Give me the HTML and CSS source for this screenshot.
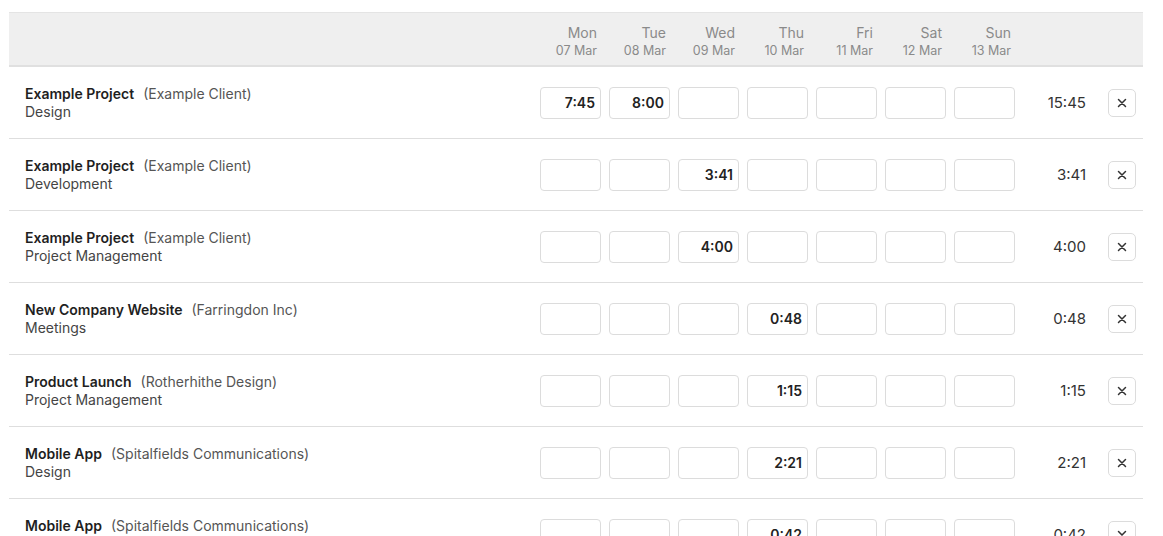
FILE: index.html
```html
<!DOCTYPE html>
<html lang="en">
<head>
<meta charset="utf-8">
<title>Timesheet</title>
<link rel="stylesheet" href="styles.css">
</head>
<body>
<div class="sheet">
  <div class="head">
    <div class="label"></div>
    <div class="days">
      <div class="day"><span class="dn">Mon</span><span class="dd">07 Mar</span></div>
      <div class="day"><span class="dn">Tue</span><span class="dd">08 Mar</span></div>
      <div class="day"><span class="dn">Wed</span><span class="dd">09 Mar</span></div>
      <div class="day"><span class="dn">Thu</span><span class="dd">10 Mar</span></div>
      <div class="day"><span class="dn">Fri</span><span class="dd">11 Mar</span></div>
      <div class="day"><span class="dn">Sat</span><span class="dd">12 Mar</span></div>
      <div class="day"><span class="dn">Sun</span><span class="dd">13 Mar</span></div>
    </div>
    <div class="total"></div>
    <div class="act"></div>
  </div>

  <div class="row">
    <div class="label"><div><b>Example Project</b><span class="client">(Example Client)</span></div><div class="task">Design</div></div>
    <div class="days">
      <div class="cell">7:45</div><div class="cell">8:00</div><div class="cell"></div><div class="cell"></div><div class="cell"></div><div class="cell"></div><div class="cell"></div>
    </div>
    <div class="total">15:45</div>
    <div class="act"><button class="del"><svg width="10" height="10" viewBox="0 0 10 10"><path d="M1.5 1.5 L8.5 8.5 M8.5 1.5 L1.5 8.5" stroke="#333" stroke-width="1.5" stroke-linecap="round"/></svg></button></div>
  </div>

  <div class="row">
    <div class="label"><div><b>Example Project</b><span class="client">(Example Client)</span></div><div class="task">Development</div></div>
    <div class="days">
      <div class="cell"></div><div class="cell"></div><div class="cell">3:41</div><div class="cell"></div><div class="cell"></div><div class="cell"></div><div class="cell"></div>
    </div>
    <div class="total">3:41</div>
    <div class="act"><button class="del"><svg width="10" height="10" viewBox="0 0 10 10"><path d="M1.5 1.5 L8.5 8.5 M8.5 1.5 L1.5 8.5" stroke="#333" stroke-width="1.5" stroke-linecap="round"/></svg></button></div>
  </div>

  <div class="row">
    <div class="label"><div><b>Example Project</b><span class="client">(Example Client)</span></div><div class="task">Project Management</div></div>
    <div class="days">
      <div class="cell"></div><div class="cell"></div><div class="cell">4:00</div><div class="cell"></div><div class="cell"></div><div class="cell"></div><div class="cell"></div>
    </div>
    <div class="total">4:00</div>
    <div class="act"><button class="del"><svg width="10" height="10" viewBox="0 0 10 10"><path d="M1.5 1.5 L8.5 8.5 M8.5 1.5 L1.5 8.5" stroke="#333" stroke-width="1.5" stroke-linecap="round"/></svg></button></div>
  </div>

  <div class="row">
    <div class="label"><div><b>New Company Website</b><span class="client">(Farringdon Inc)</span></div><div class="task">Meetings</div></div>
    <div class="days">
      <div class="cell"></div><div class="cell"></div><div class="cell"></div><div class="cell">0:48</div><div class="cell"></div><div class="cell"></div><div class="cell"></div>
    </div>
    <div class="total">0:48</div>
    <div class="act"><button class="del"><svg width="10" height="10" viewBox="0 0 10 10"><path d="M1.5 1.5 L8.5 8.5 M8.5 1.5 L1.5 8.5" stroke="#333" stroke-width="1.5" stroke-linecap="round"/></svg></button></div>
  </div>

  <div class="row">
    <div class="label"><div><b>Product Launch</b><span class="client">(Rotherhithe Design)</span></div><div class="task">Project Management</div></div>
    <div class="days">
      <div class="cell"></div><div class="cell"></div><div class="cell"></div><div class="cell">1:15</div><div class="cell"></div><div class="cell"></div><div class="cell"></div>
    </div>
    <div class="total">1:15</div>
    <div class="act"><button class="del"><svg width="10" height="10" viewBox="0 0 10 10"><path d="M1.5 1.5 L8.5 8.5 M8.5 1.5 L1.5 8.5" stroke="#333" stroke-width="1.5" stroke-linecap="round"/></svg></button></div>
  </div>

  <div class="row">
    <div class="label"><div><b>Mobile App</b><span class="client">(Spitalfields Communications)</span></div><div class="task">Design</div></div>
    <div class="days">
      <div class="cell"></div><div class="cell"></div><div class="cell"></div><div class="cell">2:21</div><div class="cell"></div><div class="cell"></div><div class="cell"></div>
    </div>
    <div class="total">2:21</div>
    <div class="act"><button class="del"><svg width="10" height="10" viewBox="0 0 10 10"><path d="M1.5 1.5 L8.5 8.5 M8.5 1.5 L1.5 8.5" stroke="#333" stroke-width="1.5" stroke-linecap="round"/></svg></button></div>
  </div>

  <div class="row">
    <div class="label"><div><b>Mobile App</b><span class="client">(Spitalfields Communications)</span></div><div class="task">Development</div></div>
    <div class="days">
      <div class="cell"></div><div class="cell"></div><div class="cell"></div><div class="cell">0:42</div><div class="cell"></div><div class="cell"></div><div class="cell"></div>
    </div>
    <div class="total">0:42</div>
    <div class="act"><button class="del"><svg width="10" height="10" viewBox="0 0 10 10"><path d="M1.5 1.5 L8.5 8.5 M8.5 1.5 L1.5 8.5" stroke="#333" stroke-width="1.5" stroke-linecap="round"/></svg></button></div>
  </div>
</div>
</body>
</html>
```
FILE: styles.css
```css
html, body {
  margin: 0;
  padding: 0;
  background: #fff;
  overflow: hidden;
}
body {
  font-family: Inter, "Liberation Sans", sans-serif;
  color: #222;
  font-size: 14px;
}
.sheet {
  margin: 12px 20px 0 9px;
  width: 1134px;
}
.head, .row {
  display: flex;
  align-items: center;
  padding-right: 7px;
}
.head {
  height: 52px;
  box-sizing: content-box;
  background: #efefef;
  border-top: 1px solid #e4e4e4;
  border-bottom: 2px solid #e0e0e0;
}
.head .days {
  padding-top: 4px;
}
.row {
  height: 71px;
  border-bottom: 1px solid #dedede;
}
.label {
  flex: 1;
  padding-left: 16px;
  line-height: 18px;
  font-size: 14px;
}
.label b {
  font-weight: 600;
  color: #1f1f1f;
}
.client {
  color: #555;
  margin-left: 9px;
}
.task {
  color: #444;
}
.days {
  display: flex;
  gap: 8px;
}
.day {
  width: 61px;
  box-sizing: border-box;
  padding-right: 4px;
  display: flex;
  flex-direction: column;
  align-items: flex-end;
  color: #8a8a8a;
}
.dn {
  font-size: 14px;
  line-height: 19px;
}
.dd {
  font-size: 12.5px;
  line-height: 18px;
}
.cell {
  width: 61px;
  height: 32px;
  box-sizing: border-box;
  border: 1px solid #dcdcdc;
  border-radius: 4px;
  text-align: right;
  padding-right: 5px;
  line-height: 30px;
  font-weight: 600;
  font-size: 14px;
  color: #222;
}
.total {
  width: 71px;
  text-align: right;
  color: #333;
  font-size: 15px;
}
.act {
  width: 28px;
  margin-left: 22px;
}
.del {
  width: 28px;
  height: 28px;
  padding: 0;
  margin: 0;
  border: 1px solid #dcdcdc;
  border-radius: 5px;
  background: #fff;
  display: flex;
  align-items: center;
  justify-content: center;
}
```
